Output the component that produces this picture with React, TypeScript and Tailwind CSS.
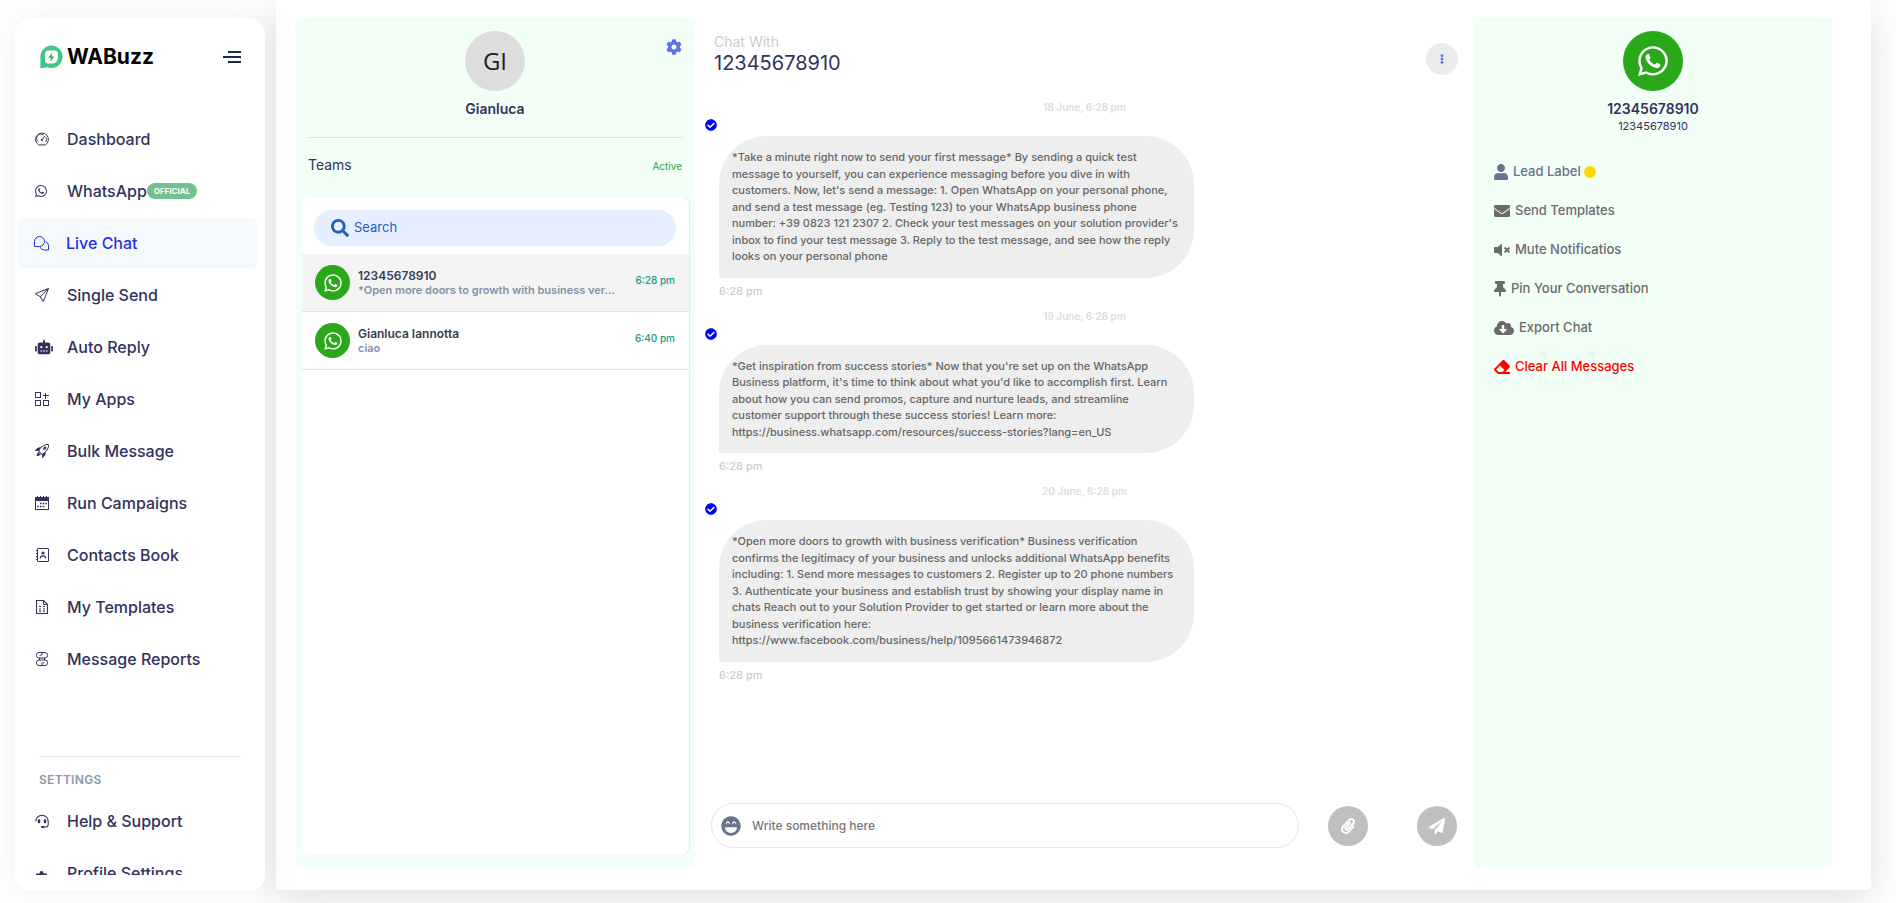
import type { ReactNode } from "react";
import {
  FaCheckCircle,
  FaCloudDownloadAlt,
  FaCog,
  FaEllipsisV,
  FaEnvelope,
  FaEraser,
  FaLaughBeam,
  FaPaperPlane,
  FaPaperclip,
  FaRobot,
  FaSearch,
  FaThumbtack,
  FaUser,
  FaVolumeMute,
  FaWhatsapp,
} from "react-icons/fa";
import { BsRocketTakeoff, BsSend, BsWhatsapp } from "react-icons/bs";

function Glyph({ children }: { children: ReactNode }) {
  return (
    <svg
      width="14"
      height="14"
      viewBox="0 0 14 14"
      fill="none"
      stroke="currentColor"
      strokeWidth="1"
      aria-hidden="true"
    >
      {children}
    </svg>
  );
}

const GaugeIcon = () => (
  <Glyph>
    <path d="M3.6 12.9A6.4 6.4 0 1 1 10.4 12.9Z" strokeLinejoin="round" />
    <path d="M3.2 9.8A4.3 4.3 0 0 1 8.6 3M11 5.4a4.3 4.3 0 0 1-.2 4.4" strokeWidth=".9" />
    <path d="M7 8 9.8 4.2" strokeLinecap="round" />
    <circle cx="6.8" cy="8" r="1" fill="currentColor" stroke="none" />
  </Glyph>
);

const ChatsIcon = () => (
  <svg
    width="15"
    height="15"
    viewBox="0 0 15 15"
    fill="none"
    stroke="currentColor"
    strokeWidth="1"
    strokeLinejoin="round"
    aria-hidden="true"
  >
    <path d="M.5 10.5v-5a5 5 0 1 1 5 5Z" />
    <path d="M11.6 5.7a4.2 4.2 0 0 1 2.9 4V14h-4.3a4.2 4.2 0 0 1-3.9-2.7" />
  </svg>
);

const AppsIcon = () => (
  <Glyph>
    <rect x=".5" y=".5" width="5" height="5" />
    <rect x=".5" y="8.5" width="5" height="5" />
    <rect x="8.5" y="8.5" width="5" height="5" />
    <path d="M10.5 1v6M8 3.5h6" />
  </Glyph>
);

const CalendarIcon = () => (
  <Glyph>
    <path
      d="M0 1h2V0h1v1h2V0h1v1h2V0h1v1h2V0h1v1h2v13H0ZM1 5v8h12V5Z"
      fill="currentColor"
      fillRule="evenodd"
      stroke="none"
    />
    <path d="M5 7.5h1.6M7.7 7.5h1.6M10.3 7.5h1.6M2.3 10.5h1.6M5 10.5h1.6M7.7 10.5h1.6" strokeWidth="1.6" />
  </Glyph>
);

const ContactsIcon = () => (
  <Glyph>
    <rect x="2.5" y=".5" width="11" height="13" rx=".5" />
    <path d="M1 2.5h1.5M1 5.5h1.5M1 8.5h1.5M1 11.5h1.5" />
    <circle cx="8" cy="5" r="1.6" fill="currentColor" stroke="none" />
    <path d="M5.2 10.5c0-3.4 5.6-3.4 5.6 0" strokeWidth="1.2" />
  </Glyph>
);

const TemplateIcon = () => (
  <Glyph>
    <path d="M1.5.5h7l4 4v9h-11Z" strokeWidth="1.1" />
    <path d="M8.5.5v4h4" />
    <path d="M4 6.5h2M8 6.5h2M4 9h2M8 9h2M4 11.2h2M8 11.2h2" strokeWidth="1.2" />
  </Glyph>
);

const ReportsIcon = () => (
  <Glyph>
    <rect x="1.5" y=".5" width="11" height="5.5" rx="2.4" />
    <rect x="1.5" y="8" width="11" height="5.5" rx="2.4" />
    <path d="M7 .5V3M4.5 3.2h2M4.5 6v2M9.5 6v2M7 11v2.5M7.5 10.8h2" />
  </Glyph>
);

const SupportIcon = () => (
  <Glyph>
    <path d="M.8 7.4a6.2 6.2 0 0 1 12.4 0v3.2c0 1.6-.8 2.4-2.4 2.4H8" strokeWidth="1.1" />
    <rect x="2.8" y="5.2" width="2.4" height="4" rx=".8" fill="currentColor" stroke="none" />
    <rect x="8.8" y="5.2" width="2.4" height="4" rx=".8" fill="currentColor" stroke="none" />
    <rect x="6" y="12" width="3.4" height="2" rx=".8" fill="currentColor" stroke="none" />
  </Glyph>
);

type NavEntry = { label: string; icon: ReactNode; badge?: string; active?: boolean };

const mainNav: NavEntry[] = [
  { label: "Dashboard", icon: <GaugeIcon /> },
  { label: "WhatsApp", icon: <BsWhatsapp size={12} />, badge: "OFFICIAL" },
  { label: "Live Chat", icon: <ChatsIcon />, active: true },
  { label: "Single Send", icon: <BsSend size={14} /> },
  { label: "Auto Reply", icon: <FaRobot size={18} /> },
  { label: "My Apps", icon: <AppsIcon /> },
  { label: "Bulk Message", icon: <BsRocketTakeoff size={14} /> },
  { label: "Run Campaigns", icon: <CalendarIcon /> },
  { label: "Contacts Book", icon: <ContactsIcon /> },
  { label: "My Templates", icon: <TemplateIcon /> },
  { label: "Message Reports", icon: <ReportsIcon /> },
];

const settingsNav: NavEntry[] = [
  { label: "Help & Support", icon: <SupportIcon /> },
  { label: "Profile Settings", icon: <FaCog size={13} className="mt-2" /> },
];

function NavList({ items }: { items: NavEntry[] }) {
  return (
    <ul className="flex flex-col gap-0.5">
      {items.map((item) => (
        <li key={item.label}>
          <a
            href="#"
            aria-current={item.active ? "page" : undefined}
            className={
              item.active
                ? "flex h-[50px] items-center rounded-md bg-[#f6f9fc] pl-4 text-base font-medium text-[#1f35e0]"
                : "flex h-[50px] items-center pl-[17px] text-base font-medium text-[#32325d]"
            }
          >
            <span className="flex w-8 shrink-0">{item.icon}</span>
            <span>{item.label}</span>
            {item.badge && (
              <span className="rounded-lg bg-[#74c08f] px-[7px] text-[8px] leading-4 font-bold text-white">
                {item.badge}
              </span>
            )}
          </a>
        </li>
      ))}
    </ul>
  );
}

function Sidebar() {
  return (
    <aside className="relative z-10 mt-[18px] mb-3 ml-[15px] flex w-[250px] shrink-0 flex-col overflow-hidden rounded-2xl bg-white pb-4 shadow-[0_0_32px_rgba(136,152,170,0.15)]">
      <div className="flex h-[78px] shrink-0 items-center justify-between pr-6 pl-[23px]">
        <a href="#" className="flex items-center gap-1 text-[21px] leading-7 font-bold text-black">
          <svg width="25" height="24" viewBox="0 0 25 24" aria-hidden="true">
            <path d="M13.4.6a11.2 11.2 0 1 1-4.2 21.6L2.4 23.2V12A11.2 11.2 0 0 1 13.4.6Z" fill="#43c587" />
            <path
              d="M10.4 5.6h6.4a3 3 0 0 1 3 3v4.6a5.4 5.4 0 0 1-5.400 5.400H10a3 3 0 0 1-3-3V9a3.400 3.400 0 0 1 3.400-3.400Z"
              fill="#fff"
            />
            <path d="m14.200 7.600-4 5.200h2.600l-.6 4 4.200-5.400h-2.800Z" fill="#2fae74" />
          </svg>
          WABuzz
        </a>
        <button type="button" aria-label="Toggle menu" className="flex flex-col items-end gap-[3px]">
          <span className="h-0.5 w-[13px] bg-[#172b4d]" />
          <span className="h-0.5 w-[18px] bg-[#172b4d]" />
          <span className="h-0.5 w-[13px] bg-[#172b4d]" />
        </button>
      </div>
      <nav className="min-h-0 flex-1 overflow-hidden pt-[18px] pr-2 pl-[3px]">
        <NavList items={mainNav} />
        <hr className="mt-[72px] mr-4 ml-[21px] border-[#dfe3e8]" />
        <h2 className="mt-[15px] mb-2 ml-[21px] text-xs leading-4 font-semibold tracking-wide text-[#8898aa]">
          SETTINGS
        </h2>
        <NavList items={settingsNav} />
      </nav>
    </aside>
  );
}

const conversations = [
  {
    name: "12345678910",
    preview: "*Open more doors to growth with business ver...",
    time: "6:28 pm",
    selected: true,
  },
  { name: "Gianluca Iannotta", preview: "ciao", time: "6:40 pm", selected: false },
];

function ConversationPanel() {
  return (
    <section className="flex w-[400px] shrink-0 flex-col rounded-l-md bg-[#f1fff7] pt-[13px] pb-[13px]">
      <div className="relative flex flex-col items-center px-[13px]">
        <div className="flex size-[60px] items-center justify-center rounded-full bg-[#dddddd] font-['Open_Sans','Noto_Sans',sans-serif] text-2xl text-[#222222]">
          GI
        </div>
        <button type="button" aria-label="Settings" className="absolute top-2 right-[13px] text-[#5e72e4]">
          <FaCog size={16} />
        </button>
        <h1 className="mt-2 text-sm font-semibold text-[#32325d]">Gianluca</h1>
      </div>
      <hr className="mx-[13px] mt-[18px] border-[#dbe5de]" />
      <div className="mt-[17px] flex items-center justify-between px-[13px] text-[#32325d]">
        <span className="text-sm">Teams</span>
        <span className="pt-0.5 text-[10px] text-[#28a745]">Active</span>
      </div>
      <div className="mt-[22px] mr-1.5 ml-[7px] flex min-h-0 flex-1 flex-col rounded-lg bg-white shadow-[1px_0_1px_rgba(0,0,0,0.08)]">
        <div className="mt-[13px] mr-[13px] mb-2 ml-3 flex h-9 items-center gap-[5px] rounded-full bg-[#e5efff] pl-[17px] text-[#1f5fc8]">
          <FaSearch size={18} />
          <input
            type="text"
            aria-label="Search"
            placeholder="Search"
            className="min-w-0 flex-1 bg-transparent text-[13px] outline-none placeholder:text-[#1f5fc8]"
          />
        </div>
        <ul>
          {conversations.map((c) => (
            <li
              key={c.name}
              className={
                c.selected ? "border-b border-[#dee2e6] bg-[#f4f4f4]" : "border-b border-[#dee2e6]"
              }
            >
              <a href="#" className="flex h-[57px] items-center pr-3.5 pl-[13px]">
                <span className="flex size-[35px] shrink-0 items-center justify-center rounded-full bg-[#2aa81a] text-white">
                  <FaWhatsapp size={20} />
                </span>
                <span className="ml-2 flex flex-col whitespace-nowrap">
                  <span className="text-xs leading-[14px] font-semibold text-[#344054]">{c.name}</span>
                  <span className="text-[11px] leading-[14px] font-semibold text-[#8392ab]">{c.preview}</span>
                </span>
                <time className="mb-1.5 ml-auto text-[10px] leading-4 font-medium text-[#17998b]">{c.time}</time>
              </a>
            </li>
          ))}
        </ul>
      </div>
    </section>
  );
}

const messages = [
  {
    date: "18 June, 6:28 pm",
    time: "6:28 pm",
    text: "*Take a minute right now to send your first message* By sending a quick test message to yourself, you can experience messaging before you dive in with customers. Now, let's send a message: 1. Open WhatsApp on your personal phone, and send a test message (eg. Testing 123) to your WhatsApp business phone number: +39 0823 121 2307 2. Check your test messages on your solution provider's inbox to find your test message 3. Reply to the test message, and see how the reply looks on your personal phone",
  },
  {
    date: "19 June, 6:28 pm",
    time: "6:28 pm",
    text: "*Get inspiration from success stories* Now that you're set up on the WhatsApp Business platform, it's time to think about what you'd like to accomplish first. Learn about how you can send promos, capture and nurture leads, and streamline customer support through these success stories! Learn more: https://business.whatsapp.com/resources/success-stories?lang=en_US",
  },
  {
    date: "20 June, 6:28 pm",
    time: "6:28 pm",
    text: "*Open more doors to growth with business verification* Business verification confirms the legitimacy of your business and unlocks additional WhatsApp benefits including: 1. Send more messages to customers 2. Register up to 20 phone numbers 3. Authenticate your business and establish trust by showing your display name in chats Reach out to your Solution Provider to get started or learn more about the business verification here: https://www.facebook.com/business/help/1095661473946872",
  },
];

function ChatPanel() {
  return (
    <section className="flex min-w-0 flex-1 flex-col">
      <header className="flex items-start justify-between pt-3.5 pr-4 pl-[19px]">
        <div>
          <p className="text-sm leading-5 text-[#cccccc]">Chat With</p>
          <h2 className="text-xl leading-[22px] text-[#32325d]">12345678910</h2>
        </div>
        <button
          type="button"
          aria-label="Conversation menu"
          className="mt-[11px] flex size-8 items-center justify-center rounded-full bg-[#ebebeb] text-[#5e72e4]"
        >
          <FaEllipsisV size={10} />
        </button>
      </header>
      <ol className="mt-6 flex min-h-0 flex-1 flex-col gap-[9px] overflow-hidden">
        {messages.map((m) => (
          <li key={m.date} className="flex flex-col">
            <p className="text-center text-[10px] leading-4 font-semibold text-[#dcdcdc]">{m.date}</p>
            <FaCheckCircle size={12} className="mt-1 ml-[10px] text-[#0000ff]" />
            <p className="mt-[5px] ml-6 w-[475px] rounded-[48px] rounded-bl-none bg-[#eeeeee] py-[13px] pr-[15px] pl-[13px] text-[11px] leading-normal font-medium text-[#666666]">
              {m.text}
            </p>
            <time className="mt-[5px] ml-6 text-[11px] leading-4 font-medium text-[#cccccc]">{m.time}</time>
          </li>
        ))}
      </ol>
      <form className="mb-5 flex items-center pr-[17px] pl-4">
        <div className="flex h-[45px] min-w-0 flex-1 items-center rounded-full border border-[#e6e6e6] pl-[9px]">
          <button type="button" aria-label="Insert emoji" className="text-[#67748e]">
            <FaLaughBeam size={20} />
          </button>
          <input
            type="text"
            aria-label="Message"
            placeholder="Write something here"
            className="ml-[11px] min-w-0 flex-1 bg-transparent text-xs font-medium outline-none placeholder:text-[#777777]"
          />
        </div>
        <button
          type="button"
          aria-label="Attach file"
          className="ml-[29px] flex size-10 shrink-0 items-center justify-center rounded-full bg-[#bfbfbf] text-white"
        >
          <FaPaperclip size={16} />
        </button>
        <button
          type="submit"
          aria-label="Send message"
          className="ml-[49px] flex size-10 shrink-0 items-center justify-center rounded-full bg-[#bfbfbf] text-white"
        >
          <FaPaperPlane size={16} />
        </button>
      </form>
    </section>
  );
}

const actions = [
  { label: "Lead Label", icon: <FaUser size={16} className="w-3.5" />, tone: "text-[#67748e]", dot: true },
  { label: "Send Templates", icon: <FaEnvelope size={16} />, tone: "text-[#6b6b6b]" },
  { label: "Mute Notificatios", icon: <FaVolumeMute size={16} />, tone: "text-[#6b6b6b]" },
  { label: "Pin Your Conversation", icon: <FaThumbtack size={16} className="w-3" />, tone: "text-[#6b6b6b]" },
  { label: "Export Chat", icon: <FaCloudDownloadAlt size={16} className="w-5" />, tone: "text-[#6b6b6b]" },
  { label: "Clear All Messages", icon: <FaEraser size={16} />, tone: "text-[#ff0000]" },
];

function ContactPanel() {
  return (
    <section className="w-[358px] shrink-0 rounded-l-md bg-[#f1fff7] pt-[13px]">
      <div className="flex flex-col items-center">
        <span className="flex size-[60px] items-center justify-center rounded-full bg-[#2aa81a] text-white">
          <FaWhatsapp size={34} />
        </span>
        <h2 className="mt-2 text-sm font-semibold text-[#32325d]">12345678910</h2>
        <p className="text-[11px] leading-[14px] text-[#32325d]">12345678910</p>
      </div>
      <ul className="mt-[27px] flex flex-col gap-[15px] pl-5">
        {actions.map((a) => (
          <li key={a.label} className="flex">
            <button
              type="button"
              className={`flex h-6 items-center gap-[5px] text-[13px] font-medium ${a.tone}`}
            >
              {a.icon}
              {a.label}
              {a.dot && <span className="-ml-0.5 size-3 rounded-full bg-[#ffd600]" />}
            </button>
          </li>
        ))}
      </ul>
    </section>
  );
}

export default function App() {
  return (
    <div className="flex h-screen overflow-hidden bg-white font-['Inter',sans-serif]">
      <Sidebar />
      <main className="mr-[25px] mb-[13px] ml-[11px] flex min-w-0 flex-1 rounded-b bg-white pt-[18px] pr-[39px] pb-[22px] pl-[19px] shadow-[0_10px_40px_rgba(20,30,40,0.14)]">
        <ConversationPanel />
        <ChatPanel />
        <ContactPanel />
      </main>
    </div>
  );
}
